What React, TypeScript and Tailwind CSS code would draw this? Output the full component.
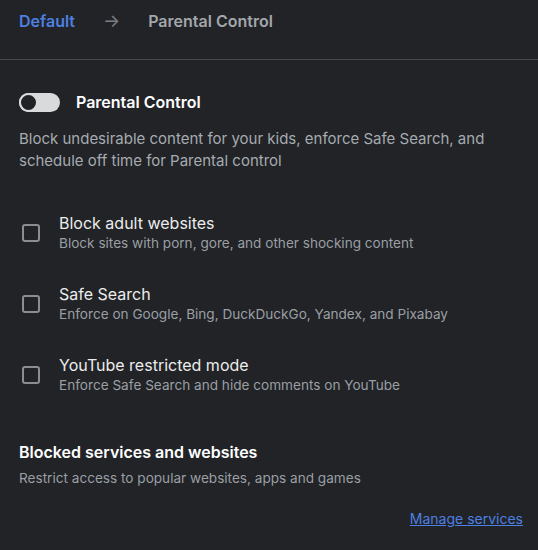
import React, { useState } from 'react'

const options = [
  { title: 'Block adult websites', desc: 'Block sites with porn, gore, and other shocking content' },
  { title: 'Safe Search', desc: 'Enforce on Google, Bing, DuckDuckGo, Yandex, and Pixabay' },
  { title: 'YouTube restricted mode', desc: 'Enforce Safe Search and hide comments on YouTube' },
]

function Toggle({ on, onClick }: { on: boolean; onClick: () => void }) {
  return (
    <button
      onClick={onClick}
      className={`w-[41px] h-[19px] rounded-full flex items-center px-[2px] ${on ? 'bg-[#4d7fe0] justify-end' : 'bg-[#d9dadc] justify-start'}`}
    >
      <span className="w-[15px] h-[15px] rounded-full bg-[#202226] border-2 border-[#d9dadc] box-content -ml-[2px]" />
    </button>
  )
}

export default function App() {
  const [enabled, setEnabled] = useState(false)
  const [checked, setChecked] = useState<boolean[]>([false, false, false])

  return (
    <div className="w-[538px] h-[550px] bg-[#212327] text-[#e8e9ea] font-['Inter',sans-serif] overflow-hidden">
      <div className="h-[60px] flex items-center px-[19px] pb-[18px] border-b border-[#46494e] text-[16px] font-semibold">
        <span className="text-[#4d80e0]">Default</span>
        <span className="ml-[28px] text-[#7b7f84] text-[18px] font-normal">→</span>
        <span className="ml-[28px] text-[#a3a7ab]">Parental Control</span>
      </div>

      <div className="px-[19px] pt-[30px]">
        <div className="flex items-center gap-[16px]">
          <Toggle on={enabled} onClick={() => setEnabled(!enabled)} />
          <span className="text-[16px] font-semibold text-white">Parental Control</span>
        </div>
        <p className="mt-[14px] text-[15px] leading-[22px] text-[#a6abb0]">
          Block undesirable content for your kids, enforce Safe Search, and schedule off time for Parental control
        </p>

        <div className="mt-[41px] flex flex-col gap-[31px]">
          {options.map((o, i) => (
            <label key={o.title} className="flex items-center gap-[19px] cursor-pointer">
              <input
                type="checkbox"
                checked={checked[i]}
                onChange={() => setChecked(checked.map((c, j) => (j === i ? !c : c)))}
                className="appearance-none ml-[3px] w-[18px] h-[18px] rounded-[3px] border-2 border-[#8a8d91] checked:bg-[#4d80e0] checked:border-[#4d80e0]"
              />
              <div className="flex flex-col">
                <span className="text-[16px] leading-[20px] text-[#ececec]">{o.title}</span>
                <span className="text-[13.6px] leading-[20px] text-[#9a9fa4]">{o.desc}</span>
              </div>
            </label>
          ))}
        </div>

        <div className="mt-[47px]">
          <div className="text-[16px] leading-[20px] font-semibold text-white">Blocked services and websites</div>
          <div className="mt-[6px] text-[13.6px] leading-[20px] text-[#9a9fa4]">Restrict access to popular websites, apps and games</div>
        </div>

        <div className="mt-[20px] flex justify-end">
          <a href="#" className="text-[14px] text-[#4d80e0] underline -mr-[4px]">Manage services</a>
        </div>
      </div>
    </div>
  )
}
